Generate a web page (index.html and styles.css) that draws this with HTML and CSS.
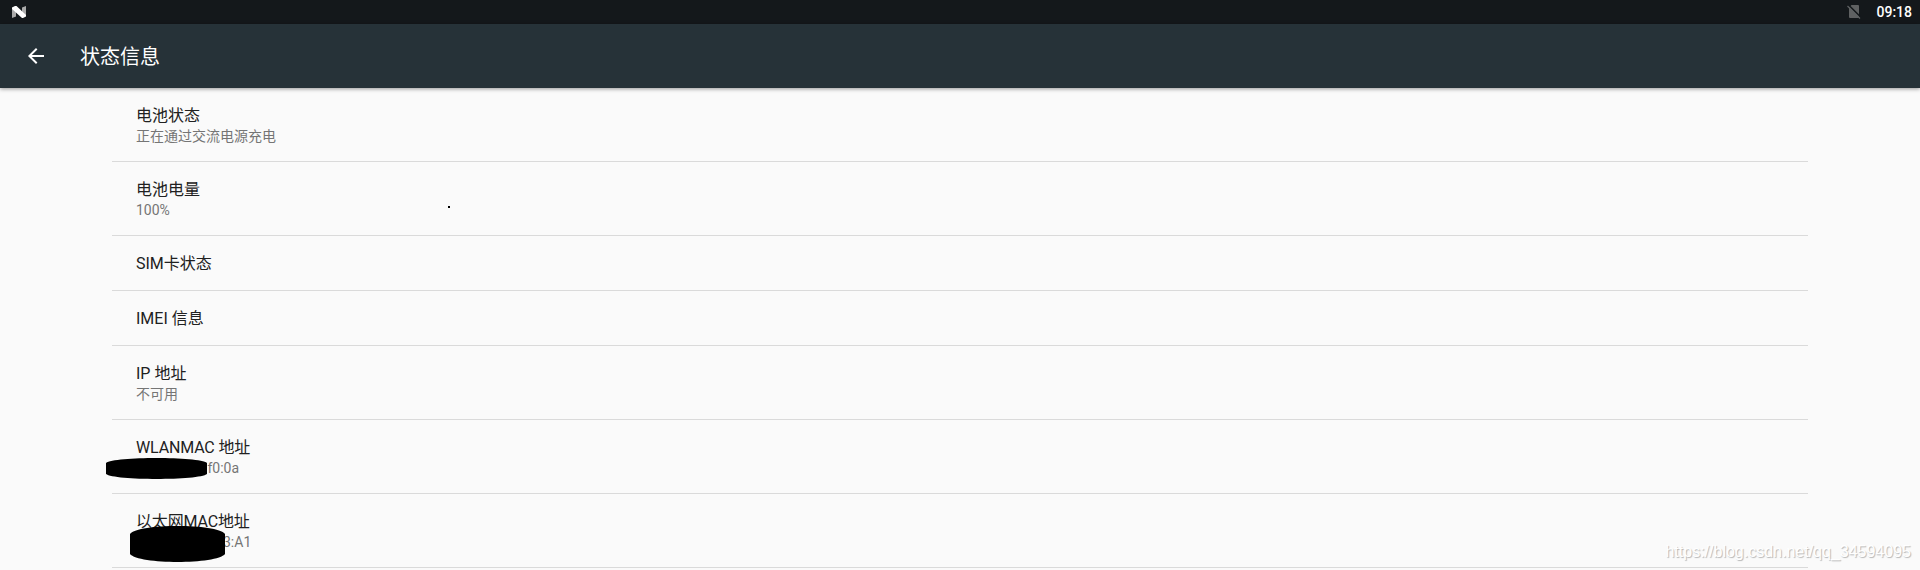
FILE: index.html
```html
<!DOCTYPE html>
<html lang="zh-CN">
<head>
  <meta charset="UTF-8">
  <meta name="viewport" content="width=device-width, initial-scale=1.0">
  <title>状态信息</title>
  <link rel="stylesheet" href="styles.css">
</head>
<body>
  <div class="status-bar">
    <svg class="n-icon" width="14" height="12" viewBox="0 0 14 12">
      <path d="M0 1.5L4 4V10.5L0 12zM14 0V10L10 8V1.5z" fill="#aaa"/>
      <path d="M0 1.5L3 0H4.5L14 9V10.5L11 12H10L0 3z" fill="#fff"/>
    </svg>
    <div class="status-right">
      <svg width="14" height="14" viewBox="0 0 14 14">
        <path d="M4.5 0H11Q12 0 12 1V12Q12 13 11 13H3Q2 13 2 12V2.5z" fill="#5f6162"/>
        <path d="M1 -0.5L14 12.5" stroke="#14181b" stroke-width="1.6"/>
        <path d="M0.5 1L13 13.5" stroke="#5f6162" stroke-width="1.2"/>
      </svg>
      <span class="clock">09:18</span>
    </div>
  </div>

  <header class="toolbar">
    <svg class="back" width="24" height="24" viewBox="0 0 24 24">
      <path d="M20 11H7.83l5.59-5.59L12 4l-8 8 8 8 1.41-1.41L7.83 13H20v-2z" fill="#fff"/>
    </svg>
    <h1>状态信息</h1>
  </header>

  <main class="list">
    <div class="item">
      <div class="title">电池状态</div>
      <div class="summary">正在通过交流电源充电</div>
    </div>
    <div class="item">
      <div class="title">电池电量</div>
      <div class="summary">100%</div>
      <span class="dot"></span>
    </div>
    <div class="item">
      <div class="title">SIM卡状态</div>
    </div>
    <div class="item">
      <div class="title">IMEI 信息</div>
    </div>
    <div class="item">
      <div class="title">IP 地址</div>
      <div class="summary">不可用</div>
    </div>
    <div class="item">
      <div class="title mac">WLANMAC 地址</div>
      <div class="summary wlan">:f0:0a</div>
      <svg class="mask mask-wlan" width="101" height="21" viewBox="0 0 101 21">
        <path d="M0 5C8 -1.6 93 -1.6 101 5V16C93 22.6 8 22.6 0 16z"/>
      </svg>
    </div>
    <div class="item">
      <div class="title mac">以太网MAC地址</div>
      <div class="summary ethernet">3:A1</div>
      <svg class="mask mask-ethernet" width="95" height="36" viewBox="0 0 95 36">
        <path d="M0 8C8 -2.6 87 -2.6 95 8V28C87 38.6 8 38.6 0 28z"/>
      </svg>
    </div>
  </main>

  <div class="watermark">https://blog.csdn.net/qq_34594095</div>
</body>
</html>
```

FILE: styles.css
```css
body {
  margin: 0;
  height: 570px;
  overflow: hidden;
  background-color: #fafafa;
  font-family: Roboto, "Noto Sans CJK SC", sans-serif;
  color: #212121;
}

.status-bar {
  display: flex;
  align-items: center;
  justify-content: space-between;
  height: 24px;
  padding: 0 8px 0 12px;
  background-color: #14181b;
}

.status-right {
  display: flex;
  align-items: center;
  gap: 15px;
}

.clock {
  color: #fff;
  font-size: 14px;
  font-weight: 500;
}

.toolbar {
  display: flex;
  align-items: center;
  height: 64px;
  padding-left: 24px;
  background-color: #263238;
  box-shadow: 0 1px 4px rgba(0, 0, 0, 0.4);
}

.toolbar h1 {
  margin: 0 0 0 32px;
  padding-bottom: 2px;
  color: #fff;
  font-size: 20px;
  font-weight: 400;
}

.list {
  padding: 0 112px;
}

.item {
  position: relative;
  padding: 17px 24px 15px;
  border-bottom: 1px solid #dadada;
}

.title {
  font-size: 16px;
  line-height: 22px;
}

.mac {
  letter-spacing: -0.15px;
}

.summary {
  color: #757575;
  font-size: 14px;
  line-height: 19px;
}

.wlan {
  padding-left: 68px;
}

.ethernet {
  padding-left: 87px;
}

.dot {
  position: absolute;
  left: 336px;
  top: 44px;
  width: 2px;
  height: 2px;
  background-color: #000;
}

/* black blobs over the hidden part of the addresses */
.mask {
  position: absolute;
}

.mask-wlan {
  left: -6px;
  top: 38px;
}

.mask-ethernet {
  left: 18px;
  top: 32px;
}

.watermark {
  position: absolute;
  right: 9px;
  bottom: 9px;
  color: #fff;
  font-family: "Liberation Sans", Arial, sans-serif;
  font-size: 16px;
  line-height: 18px;
  text-shadow: 1px 1px 1px rgba(0, 0, 0, 0.28);
}
```
